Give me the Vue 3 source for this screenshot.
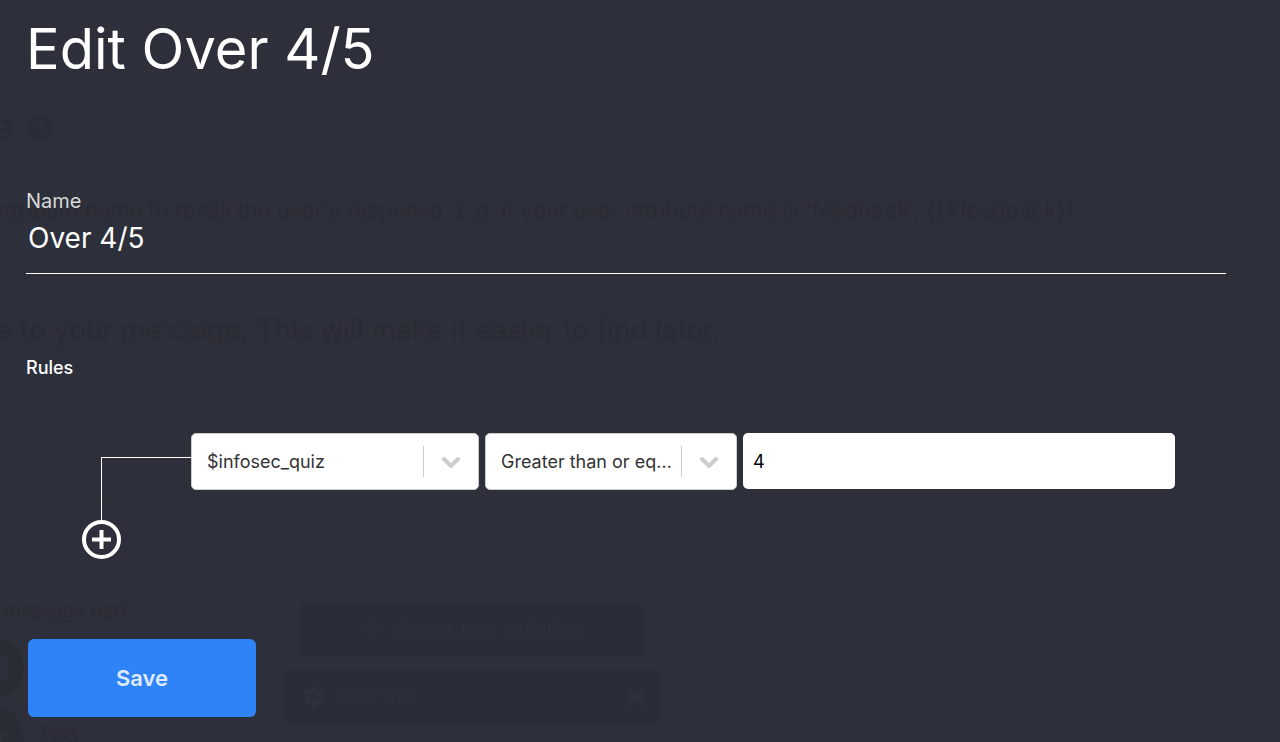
<script setup>
import { ref } from 'vue'

const name = ref('Over 4/5')
const attribute = ref('$infosec_quiz')
const operator = ref('Greater than or equal to')
const value = ref('4')
const hint = "attribute name to recall the user's response. E.g. if your user attribute name is 'feedback', {{$feedback}}."
</script>

<template>
  <div class="page">
    <div class="backdrop" aria-hidden="true">
      <div class="b-title">
        <span>e</span>
        <svg width="26" height="26" viewBox="0 0 26 26">
          <circle cx="13" cy="13" r="12.5" fill="#292d38" />
          <path d="M9 10c0-2.600 1.700-4 4-4s4 1.400 4 3.500c0 3-4 3.200-4 6" fill="none" stroke="#2e303b" stroke-width="2.500" />
          <circle cx="13" cy="19" r="1.600" fill="#2e303b" />
        </svg>
      </div>
      <p class="b-hint">{{ hint }}</p>
      <p class="b-sub">e to your message. This will make it easier to find later.</p>
      <div class="b-rule"></div>
      <div class="b-columns">
        <div class="b-parts">
          <p>message part</p>
          <div class="b-part">
            <svg width="23" height="60" viewBox="0 0 23 60">
              <circle cx="-7" cy="30" r="30" fill="#292b35" />
              <rect x="-20" y="18" width="28" height="24" rx="4" fill="#2d2f3a" />
            </svg>
          </div>
          <div class="b-part">
            <svg width="23" height="60" viewBox="0 0 23 60">
              <circle cx="-7" cy="30" r="30" fill="#292b35" />
              <path d="M-4 25H7v5H3v14h-5z" fill="#2d2f3a" />
            </svg>
            <span>Text</span>
          </div>
        </div>
        <div class="b-variations">
          <div class="b-create">
            <svg width="16" height="16" viewBox="0 0 16 16"><path d="M8 0v16M0 8h16" stroke="#2e303b" stroke-width="3" /></svg>
            <span>Create new variation</span>
          </div>
          <div class="b-item">
            <svg width="22" height="22" viewBox="0 0 22 22">
              <circle cx="11" cy="11" r="6" fill="none" stroke="#2e303b" stroke-width="5" />
              <path d="M11 0v4M11 18v4M1.500 5.500L5 7.500M17 14.500l3.500 2M1.500 16.500L5 14.500M17 7.500l3.500-2" stroke="#2e303b" stroke-width="5" />
            </svg>
            <span>Over 4/5</span>
            <svg class="b-close" width="20" height="20" viewBox="0 0 20 20"><path d="M2 2l16 16M18 2L2 18" stroke="#2e303b" stroke-width="3.500" /></svg>
          </div>
        </div>
      </div>
    </div>

    <form class="dialog" @submit.prevent>
      <h1>Edit Over 4/5</h1>

      <div class="field">
        <label for="name">Name</label>
        <input id="name" v-model="name" type="text" />
      </div>

      <h2>Rules</h2>

      <div class="rule">
        <div class="connector"></div>
        <div class="conditions">
          <div class="select">
            <select v-model="attribute" aria-label="Attribute">
              <option>$infosec_quiz</option>
            </select>
            <span class="indicator">
              <svg width="20" height="20" viewBox="0 0 20 20"><path d="M3 7l7 7 7-7" /></svg>
            </span>
          </div>
          <div class="select">
            <select v-model="operator" aria-label="Operator">
              <option>Greater than or equal to</option>
            </select>
            <span class="indicator">
              <svg width="20" height="20" viewBox="0 0 20 20"><path d="M3 7l7 7 7-7" /></svg>
            </span>
          </div>
          <input v-model="value" class="value" type="text" aria-label="Value" />
        </div>
      </div>

      <button class="add" type="button" aria-label="Add rule">
        <svg width="39" height="39" viewBox="0 0 39 39" fill="none" stroke="#fff">
          <circle cx="19.500" cy="19.500" r="17.500" stroke-width="4" />
          <path d="M19.500 10v19M10 19.500h19" stroke-width="4" />
        </svg>
      </button>

      <button class="save" type="submit">Save</button>
    </form>
  </div>
</template>

<style>
body {
  background: #2d2f3a;
}
</style>

<style scoped>
* {
  box-sizing: border-box;
}
.page {
  position: relative;
  min-height: 100vh;
  overflow: hidden;
  background: #2d2f3a;
  font-family: Inter, "Open Sans", sans-serif;
}
p,
h1,
h2 {
  margin: 0;
}
.backdrop {
  position: absolute;
  inset: 0;
  overflow: hidden;
  color: #292b35;
  white-space: nowrap;
}
.b-title {
  display: flex;
  align-items: center;
  gap: 14px;
  height: 48px;
  margin: 104px 0 0 -12px;
  font-size: 42px;
  line-height: 40px;
}
.b-title span {
  padding-bottom: 4px;
}
.b-hint {
  margin: 42px 0 0 -8px;
  font-size: 22px;
  line-height: 32px;
}
.b-sub {
  margin: 84px 0 0 -4px;
  font-size: 28px;
  line-height: 40px;
}
.b-rule {
  width: 622px;
  height: 1px;
  margin-top: 152px;
  background: #292b35;
}
.b-columns {
  display: flex;
  margin-top: 87px;
  font-size: 19px;
}
.b-parts {
  width: 285px;
}
.b-parts p {
  margin: 11px 0 15px 4px;
  line-height: 22px;
}
.b-part {
  display: flex;
  align-items: center;
  gap: 16px;
  margin-bottom: 8px;
}
.b-part span {
  padding-bottom: 4px;
}
.b-variations {
  width: 373px;
  padding-top: 12px;
}
.b-create {
  display: flex;
  align-items: center;
  justify-content: center;
  gap: 16px;
  height: 54px;
  margin: 0 15px 15px;
  border-radius: 6px;
  background: #292d38;
  color: #2e303b;
}
.b-item {
  display: flex;
  align-items: center;
  gap: 10px;
  height: 52px;
  padding: 0 12px 0 18px;
  background: #292d38;
  color: #2e303b;
}
.b-close {
  margin-left: auto;
}
.dialog {
  position: relative;
  padding: 13px 54px 24px 26px;
  color: #fff;
}
h1 {
  font-size: 56px;
  font-weight: 400;
  line-height: 72px;
}
.field {
  display: flex;
  flex-direction: column;
  margin-top: 104px;
  border-bottom: 1px solid #fff;
}
.field label {
  color: #d9d9d9;
  font-size: 20px;
  line-height: 24px;
}
.field input {
  height: 60px;
  padding: 0 2px 10px;
  border: 0;
  outline: 0;
  background: transparent;
  color: #fff;
  font: inherit;
  font-size: 28px;
}
h2 {
  margin-top: 82px;
  font-size: 18px;
  font-weight: 500;
  line-height: 24px;
}
.rule {
  display: flex;
  align-items: flex-start;
  margin: 53px 51px 0 75px;
}
.connector {
  flex: none;
  width: 90px;
  height: 63px;
  margin-top: 24px;
  border: solid #fff;
  border-width: 1px 0 0 1px;
}
.conditions {
  display: grid;
  flex: 1;
  grid-template-columns: 288fr 252fr 432fr;
  gap: 6px;
}
.select {
  display: flex;
  min-width: 0;
  height: 57px;
  border: 1px solid #ccc;
  border-radius: 5px;
  background: #fff;
}
.select select {
  flex: 1;
  min-width: 0;
  padding: 0 0 0 15px;
  border: 0;
  outline: 0;
  appearance: none;
  background: transparent;
  color: #333;
  font: inherit;
  font-size: 18px;
  text-overflow: ellipsis;
}
.indicator {
  display: flex;
  flex: none;
  align-items: center;
  justify-content: center;
  width: 55px;
  margin: 12px 0;
  border-left: 1px solid #ccc;
}
.indicator path {
  fill: none;
  stroke: #ccc;
  stroke-width: 4;
  stroke-linecap: round;
  stroke-linejoin: round;
}
.value {
  min-width: 0;
  height: 56px;
  padding: 0 10px;
  border: 0;
  border-radius: 5px;
  outline: 0;
  background: #fff;
  color: #000;
  font: inherit;
  font-size: 18px;
}
.add {
  display: block;
  width: 39px;
  height: 39px;
  margin-left: 56px;
  padding: 0;
  border: 0;
  background: transparent;
}
.add svg {
  display: block;
}
.save {
  display: block;
  width: 228px;
  height: 78px;
  margin: 80px 0 0 2px;
  border: 0;
  border-radius: 6px;
  background: #2f83f9;
  color: #dfebff;
  font: inherit;
  font-size: 22px;
  font-weight: 600;
}
</style>
